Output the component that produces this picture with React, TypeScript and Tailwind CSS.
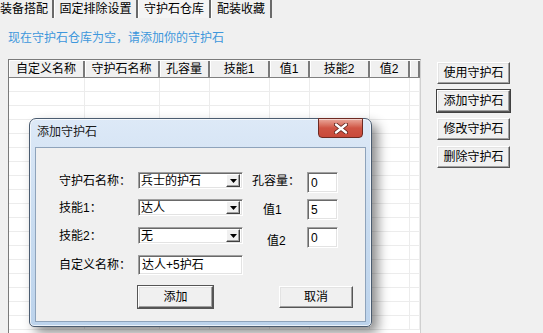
import React from 'react';

const cols = 'grid grid-cols-[76px_75px_50px_60px_40px_60px_40px_1fr]';
const headers = ['自定义名称', '守护石名称', '孔容量', '技能1', '值1', '技能2', '值2', ''];

const raised =
  'bg-[#f0f0f0] border border-t-white border-l-white border-r-[#555] border-b-[#555] shadow-[inset_-1px_-1px_0_#a0a0a0,inset_1px_1px_0_#e3e3e3] flex items-center justify-center leading-[14px]';
const sunken =
  'bg-white border border-t-[#a0a0a0] border-l-[#a0a0a0] border-r-white border-b-white shadow-[inset_1px_1px_0_#696969,inset_-1px_-1px_0_#e3e3e3]';

function Combo({ value }: { value: string }) {
  return (
    <div className={`${sunken} w-[105px] h-[17px] flex items-center pl-[2px] pr-[2px] leading-[14px]`}>
      <span className="flex-1">{value}</span>
      <div className="w-[14px] h-[13px] bg-[#f0f0f0] border border-t-white border-l-white border-r-[#404040] border-b-[#404040] shadow-[inset_-1px_-1px_0_#a0a0a0] flex items-center justify-center">
        <svg width="7" height="4" viewBox="0 0 7 4">
          <path d="M0 0h7L3.5 4z" fill="#000" />
        </svg>
      </div>
    </div>
  );
}

function Field({ value, w = 'w-[31px]', h = 'h-[21px]' }: { value: string; w?: string; h?: string }) {
  return (
    <div className={`${sunken} ${w} ${h} flex items-center pl-[3px] leading-[14px]`}>{value}</div>
  );
}

export default function App() {
  return (
    <div className="relative w-[543px] h-[333px] overflow-hidden bg-[#f0f0f0] text-[12px] text-black font-['Liberation_Sans','Noto_Sans_CJK_SC',sans-serif]">
      {/* tabs */}
      <div className="flex h-[18px] leading-[14px]">
        <div className="w-[58px] -ml-[4px] pt-[2px] text-center border-r-2 border-r-[#6a6a6a]">装备搭配</div>
        <div className="w-[84px] pt-[2px] text-center border-l border-l-white border-r-2 border-r-[#6a6a6a]">固定排除设置</div>
        <div className="w-[73px] pt-[2px] text-center bg-[#f4f4f4] border-l border-l-white border-r-2 border-r-[#6a6a6a]">守护石仓库</div>
        <div className="w-[61px] pt-[2px] text-center border-l border-l-white border-r-2 border-r-[#6a6a6a]">配装收藏</div>
      </div>

      <div className="mt-[13px] pl-[8px] leading-[14px] text-[#3d97dc]">现在守护石仓库为空，请添加你的守护石</div>

      <div className="flex mt-[14px] ml-[8px]">
        {/* list view */}
        <div className="w-[413px] h-[290px] overflow-hidden border border-[#7a7a7a] border-r-[#d0d0d0] bg-white">
          <div className={`${cols} h-[18px] bg-[#f0f0f0] border-b border-b-[#808080] border-t border-t-white`}>
            {headers.map((h, i) => (
              <div
                key={i}
                className="flex items-center justify-center leading-[14px] border-r-2 border-r-[#7a7a7a] shadow-[inset_1px_0_0_#fff]"
              >
                {h}
              </div>
            ))}
          </div>
          {Array.from({ length: 18 }).map((_, r) => (
            <div key={r} className={`${cols} h-[14px] border-b border-b-[#ececec]`}>
              {headers.map((_, i) => (
                <div key={i} className="border-r border-r-[#ececec]" />
              ))}
            </div>
          ))}
        </div>

        {/* side buttons */}
        <div className="ml-[16px] mt-[3px] flex flex-col gap-[6px]">
          <div className={`${raised} w-[73px] h-[22px]`}>使用守护石</div>
          <div className={`${raised} w-[73px] h-[22px] outline outline-1 outline-[#404040]`}>添加守护石</div>
          <div className={`${raised} w-[73px] h-[22px]`}>修改守护石</div>
          <div className={`${raised} w-[73px] h-[22px]`}>删除守护石</div>
        </div>
      </div>

      {/* dialog window */}
      <div className="absolute left-[29px] top-[118px] w-[343px] h-[209px] rounded-t-[7px] rounded-b-[5px] border border-[#4b5c70] bg-gradient-to-b from-[#dde9f7] via-[#c9dcf0] to-[#bcd3ec] shadow-[inset_0_0_0_1px_rgba(255,255,255,0.7),6px_6px_12px_rgba(0,0,0,0.45)] flex flex-col px-[5px] pb-[4px]">
        <div className="h-[28px] pl-[2px] pt-[6px] leading-[14px] text-[#1a1a1a]">添加守护石</div>
        <div className="absolute -top-[1px] right-[8px] w-[45px] h-[20px] rounded-b-[4px] border border-[#6d2a22] bg-gradient-to-b from-[#e9a89c] via-[#cf5444] to-[#c8493a] shadow-[inset_0_1px_0_rgba(255,255,255,0.5)] flex items-center justify-center">
          <svg width="14" height="11" viewBox="0 0 14 11">
            <path d="M2 1.5L12 9.5M12 1.5L2 9.5" stroke="#5a1f18" strokeWidth="4" strokeLinecap="round" />
            <path d="M2 1.5L12 9.5M12 1.5L2 9.5" stroke="#fff" strokeWidth="2.4" strokeLinecap="round" />
          </svg>
        </div>

        <div className="flex-1 border border-[#8ea3bb] bg-[#f0f0f0] pt-[24px] pl-[23px] leading-[14px]">
          <div className="flex items-start h-[21px]">
            <div className="w-[79px] h-[17px] flex items-center">守护石名称：</div>
            <Combo value="兵士的护石" />
            <div className="w-[64px] h-[17px] pl-[9px] flex items-center">孔容量：</div>
            <Field value="0" />
          </div>
          <div className="flex items-start h-[21px] mt-[6px]">
            <div className="w-[79px] h-[17px] flex items-center">技能1：</div>
            <Combo value="达人" />
            <div className="w-[64px] h-[21px] pl-[20px] flex items-center">值1</div>
            <Field value="5" />
          </div>
          <div className="flex items-start h-[21px] mt-[7px]">
            <div className="w-[79px] h-[17px] flex items-center">技能2：</div>
            <Combo value="无" />
            <div className="w-[64px] h-[21px] pl-[24px] pt-[6px] flex items-center">值2</div>
            <Field value="0" />
          </div>
          <div className="flex items-center h-[20px] mt-[7px]">
            <div className="w-[79px]">自定义名称：</div>
            <Field value="达人+5护石" w="w-[105px]" h="h-[20px]" />
          </div>
          <div className="flex mt-[11px] ml-[79px]">
            <div className={`${raised} w-[75px] h-[22px] outline outline-1 outline-[#555]`}>添加</div>
            <div className={`${raised} w-[74px] h-[22px] ml-[66px]`}>取消</div>
          </div>
        </div>
      </div>
    </div>
  );
}
